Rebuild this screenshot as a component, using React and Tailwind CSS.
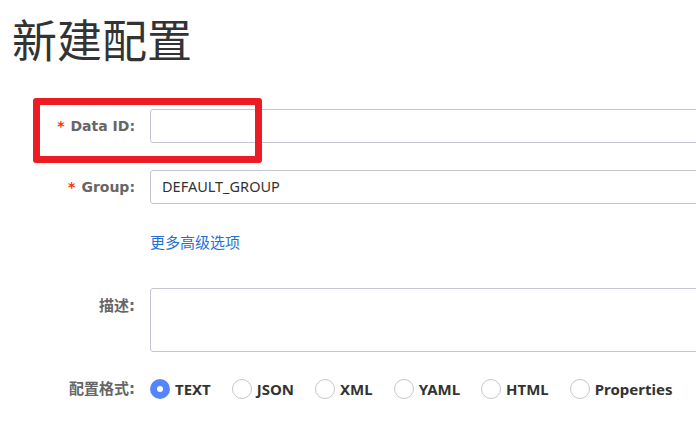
import React from "react";

const formats = ["TEXT", "JSON", "XML", "YAML", "HTML", "Properties"];

const Label = ({ required, children, className = "" }) => (
  <div className={`w-[135px] shrink-0 text-right font-bold text-[#666] ${className}`}>
    {required && <span className="mr-[6px] text-[#ff3000]">*</span>}
    {children}
  </div>
);

const Radio = ({ label, checked }) => (
  <label className="flex items-center gap-[5px]">
    {checked ? (
      <span className="flex h-[20px] w-[20px] items-center justify-center rounded-full bg-[#5584ff]">
        <span className="h-[6px] w-[6px] rounded-full bg-white" />
      </span>
    ) : (
      <span className="h-[20px] w-[20px] rounded-full border border-[#c4c6cf] bg-white" />
    )}
    <span
      className="text-[15px] leading-[20px] font-bold text-[#333]"
      style={{ fontFamily: '"Noto Sans", sans-serif' }}
    >
      {label}
    </span>
  </label>
);

const App = () => {
  return (
    <div
      className="relative h-[422px] w-[696px] overflow-hidden bg-white"
      style={{ fontFamily: '"DejaVu Sans", "Noto Sans CJK SC", sans-serif' }}
    >
      <h1
        className="ml-[12px] mt-[12px] text-[45px] leading-[54px] font-normal text-[#333]"
        style={{ fontFamily: '"Noto Sans CJK SC", sans-serif' }}
      >
        新建配置
      </h1>

      <div className="mt-[43px] flex flex-col">
        <div className="flex items-center gap-[15px]">
          <Label required className="text-[14px]">Data ID:</Label>
          <div className="h-[34px] w-[700px] shrink-0 rounded-[3px] border border-[#c4c6cf] bg-white" />
        </div>

        <div className="mt-[27px] flex items-center gap-[15px]">
          <Label required className="text-[14px]">Group:</Label>
          <div
            className="flex h-[34px] w-[700px] shrink-0 items-center rounded-[3px] border border-[#c4c6cf] bg-white pl-[11px] text-[14.5px] text-[#333]"
            style={{ fontFamily: '"Noto Sans", sans-serif' }}
          >
            DEFAULT_GROUP
          </div>
        </div>

        <div className="mt-[28px] pl-[150px] leading-[20px]">
          <a
            className="text-[15px] leading-[20px] text-[#1f6fd6]"
            style={{ fontFamily: '"Noto Sans CJK SC", sans-serif' }}
          >
            更多高级选项
          </a>
        </div>

        <div className="mt-[35px] flex items-start gap-[15px]">
          <Label className="pt-[8px] text-[15px] leading-[20px]">描述:</Label>
          <div className="h-[64px] w-[700px] shrink-0 rounded-[3px] border border-[#c4c6cf] bg-white" />
        </div>

        <div className="mt-[27px] flex items-center gap-[15px]">
          <Label className="text-[15px] leading-[20px]">配置格式:</Label>
          <div className="flex items-center gap-[21px]">
            {formats.map((f, i) => (
              <Radio key={f} label={f} checked={i === 0} />
            ))}
          </div>
        </div>
      </div>

      {/* red highlight annotation */}
      <div className="pointer-events-none absolute left-[33px] top-[98px] h-[65px] w-[229px] rounded-[3px] border-[7px] border-[#ec1c24]" />
    </div>
  );
};

export default App;
